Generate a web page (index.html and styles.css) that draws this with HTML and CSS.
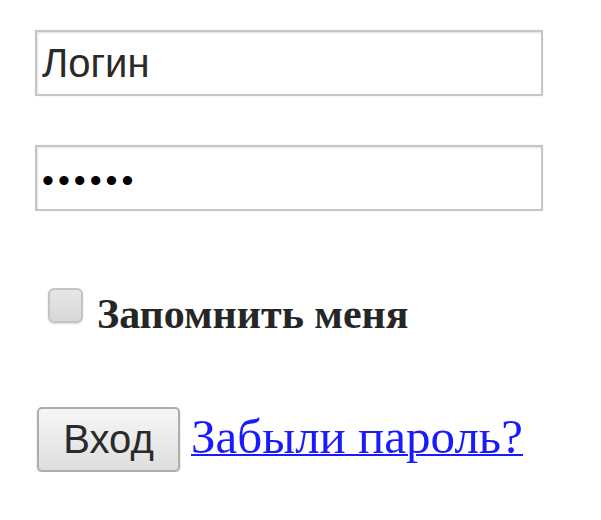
FILE: index.html
```html
<!DOCTYPE html>
<html lang="ru">
<head>
<meta charset="utf-8">
<title>Вход</title>
<link rel="stylesheet" href="styles.css">
</head>
<body>
<form class="login">
  <input class="field" type="text" value="Логин">
  <input class="field field-pass" type="password" value="123456">
  <label class="remember">
    <input class="check" type="checkbox">
    <span class="remember-text">Запомнить меня</span>
  </label>
  <div class="actions">
    <button class="btn" type="button">Вход</button>
    <a class="forgot" href="#">Забыли пароль?</a>
  </div>
</form>
</body>
</html>
```
FILE: styles.css
```css
html, body {
  margin: 0;
  padding: 0;
  background: #ffffff;
}

.login {
  display: flex;
  flex-direction: column;
  align-items: flex-start;
  padding: 30px 0 0 35px;
}

.field {
  display: block;
  box-sizing: border-box;
  width: 508px;
  height: 66px;
  margin: 0;
  padding: 0 5px;
  border: 2px solid #c6c6c6;
  box-shadow: inset 1px 1px 2px rgba(0,0,0,0.12), 0 0 1px rgba(0,0,0,0.15);
  font-family: "Liberation Sans", Arial, sans-serif;
  font-size: 40px;
  color: #2a2a2a;
  background: #ffffff;
  outline: none;
}

.field-pass {
  margin-top: 49px;
  padding-top: 4px;
  font-size: 34px;
  letter-spacing: 4px;
  color: #000000;
}

.remember {
  display: flex;
  align-items: flex-start;
  gap: 14px;
  margin-top: 77px;
  margin-left: 13px;
}

.check {
  appearance: none;
  -webkit-appearance: none;
  box-sizing: border-box;
  width: 35px;
  height: 35px;
  margin: 0;
  border: 2px solid #c4c4c4;
  border-radius: 6px;
  background: linear-gradient(#e6e6e6, #d8d8d8);
  box-shadow: 0 1px 2px rgba(0,0,0,0.15);
}

.remember-text {
  font-family: "Liberation Serif", "Times New Roman", serif;
  font-weight: bold;
  font-size: 42px;
  line-height: 42px;
  color: #262626;
  margin-top: 5px;
}

.actions {
  display: flex;
  align-items: flex-start;
  gap: 11px;
  margin-top: 72px;
  margin-left: 2px;
}

.btn {
  box-sizing: border-box;
  width: 143px;
  height: 65px;
  padding: 0;
  border: 2px solid #adadad;
  border-radius: 5px;
  background: linear-gradient(#f6f6f6, #dedede);
  box-shadow: 0 1px 2px rgba(0,0,0,0.2);
  font-family: "Liberation Sans", Arial, sans-serif;
  font-size: 40px;
  color: #2a2a2a;
}

.forgot {
  margin-top: 2px;
  font-family: "Liberation Serif", "Times New Roman", serif;
  font-size: 49px;
  line-height: 56px;
  color: #1a1aff;
  text-decoration: underline;
  text-decoration-thickness: 2px;
}
```
